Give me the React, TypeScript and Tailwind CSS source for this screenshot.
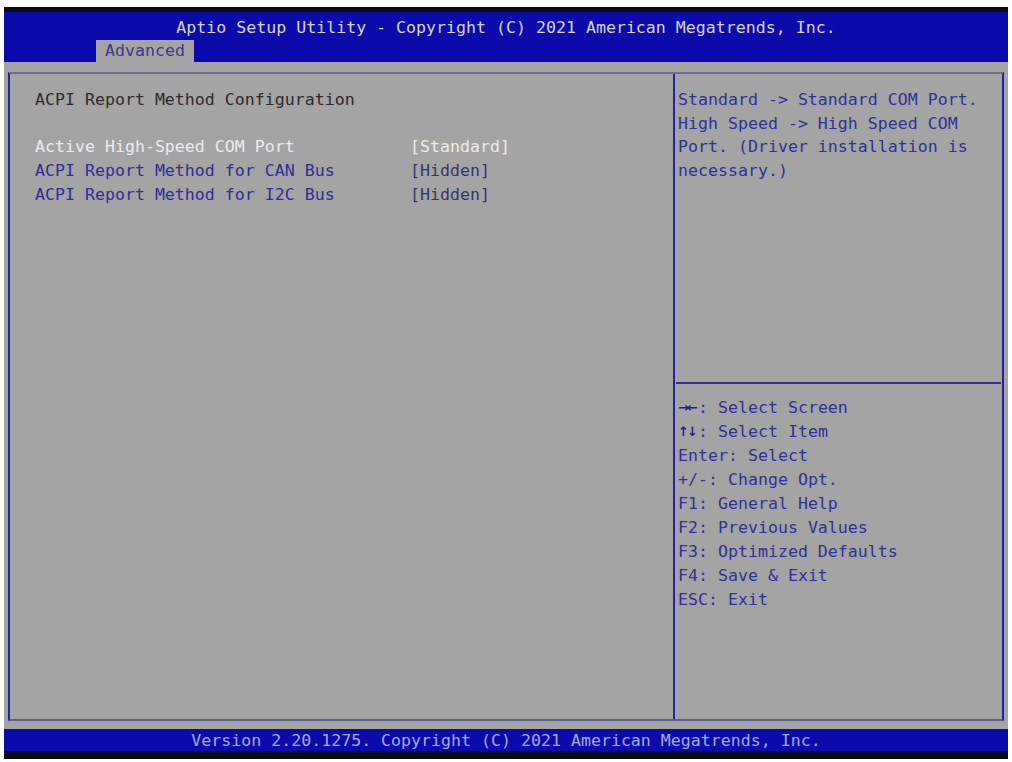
import React from 'react';

const mono = { fontFamily: '"DejaVu Sans Mono", "Liberation Mono", monospace' };

function App() {
  const items = [
    { name: 'Active High-Speed COM Port', value: '[Standard]', active: true },
    { name: 'ACPI Report Method for CAN Bus', value: '[Hidden]', active: false },
    { name: 'ACPI Report Method for I2C Bus', value: '[Hidden]', active: false },
  ];

  const help = [
    'Standard -> Standard COM Port.',
    'High Speed -> High Speed COM',
    'Port. (Driver installation is',
    'necessary.)',
  ];

  const keys = [
    { key: '→←', text: ': Select Screen', arrow: true },
    { key: '↑↓', text: ': Select Item', arrow: true },
    { key: 'Enter', text: ': Select' },
    { key: '+/-', text: ': Change Opt.' },
    { key: 'F1', text: ': General Help' },
    { key: 'F2', text: ': Previous Values' },
    { key: 'F3', text: ': Optimized Defaults' },
    { key: 'F4', text: ': Save & Exit' },
    { key: 'ESC', text: ': Exit' },
  ];

  return (
    <div
      className="w-[1012px] h-[762px] bg-white pt-[7px] px-[4px] overflow-hidden text-[16.6px] whitespace-pre"
      style={mono}
    >
      {/* Header */}
      <div className="h-[5px] bg-[#0a0a14]" />
      <div className="h-[50px] bg-[#0b0bac] flex flex-col">
        <div className="pt-[4px] h-[28px] leading-[24px] text-center text-[#d6d6d6]">
          Aptio Setup Utility - Copyright (C) 2021 American Megatrends, Inc.
        </div>
        <div className="pl-[92px] flex">
          <div className="h-[22px] px-[9px] bg-[#a4a4a4] text-[#3a3a8c] leading-[22px]">Advanced</div>
        </div>
      </div>

      {/* Body */}
      <div className="h-[667px] bg-[#a4a4a4] pt-[10px] px-[4px]">
        <div className="h-[649px] flex border-t-[2px] border-b-[2px] border-l-[2px] border-r-[2px] border-t-[#6e6e8c] border-b-[#5a5a86] border-l-[#2424a0] border-r-[#2424a0]">
          {/* Left panel */}
          <div className="w-[663px] pl-[25px] pt-[14px]">
            <div className="leading-[24px] text-[#2b2b2b]">ACPI Report Method Configuration</div>
            <div className="mt-[23px] flex flex-col">
              {items.map((item) => (
                <div key={item.name} className="flex leading-[24px]">
                  <div className={`w-[375px] ${item.active ? 'text-[#ececec]' : 'text-[#2e2e98]'}`}>{item.name}</div>
                  <div className={item.active ? 'text-[#ececec]' : 'text-[#34346c]'}>{item.value}</div>
                </div>
              ))}
            </div>
          </div>

          {/* Divider */}
          <div className="w-[2px] bg-[#2424a0]" />

          {/* Right panel */}
          <div className="flex-1 flex flex-col">
            <div className="h-[308px] pl-[3px] pt-[14px] text-[#30309a]">
              {help.map((line) => (
                <div key={line} className="leading-[23.5px]">{line}</div>
              ))}
            </div>
            <div className="h-[2px] mx-[1px] bg-[#34347e]" />
            <div className="pl-[3px] pt-[12px] text-[#30309a]">
              {keys.map((k) => (
                <div key={k.key} className="leading-[24px] flex">
                  {k.arrow ? (
                    <span className="w-[20px] flex text-[#22228e] font-bold font-['DejaVu_Sans',sans-serif] text-[13px]">
                      <span className="w-[9px] text-center">{k.key[0]}</span>
                      <span className="w-[11px] text-center">{k.key[1]}</span>
                    </span>
                  ) : (
                    <span>{k.key}</span>
                  )}
                  <span>{k.text}</span>
                </div>
              ))}
            </div>
          </div>
        </div>
      </div>

      {/* Footer */}
      <div className="h-[22px] bg-[#0b0bac] text-center leading-[24px] text-[#a8a8e4]">
        Version 2.20.1275. Copyright (C) 2021 American Megatrends, Inc.
      </div>
      <div className="h-[8px] bg-[#0a0a14]" />
    </div>
  );
}

export default App;
